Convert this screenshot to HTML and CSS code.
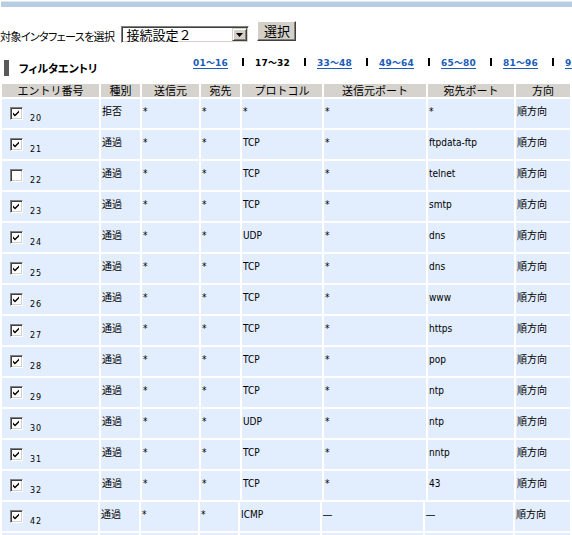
FILE: index.html
```html
<!DOCTYPE html>
<html lang="ja">
<head>
    <meta charset="UTF-8">
    <title>フィルタ設定</title>
    <link rel="stylesheet" href="styles.css">
</head>
<body>
    <div class="topbar"></div>

    <div class="pick">
        <span class="pick-label">対象インタフェースを選択</span>
        <div class="combo">
            <span class="combo-text">接続設定２</span>
            <span class="combo-btn"><svg width="7" height="4" viewBox="0 0 7 4"><path d="M0 0h7L3.5 4z" fill="#000"/></svg></span>
        </div>
        <button class="btn">選択</button>
    </div>

    <div class="head">
        <h2 class="title">フィルタエントリ</h2>
        <div class="pages">
            <a class="pg" href="#">01〜16</a><span class="sep"></span>
            <b class="pg cur">17〜32</b><span class="sep"></span>
            <a class="pg" href="#">33〜48</a><span class="sep"></span>
            <a class="pg" href="#">49〜64</a><span class="sep"></span>
            <a class="pg" href="#">65〜80</a><span class="sep"></span>
            <a class="pg" href="#">81〜96</a><span class="sep"></span>
            <a class="pg" href="#">97〜112</a>
        </div>
    </div>

    <table class="entries">
        <colgroup>
            <col style="width:97px"><col style="width:39px"><col style="width:57px"><col style="width:39px">
            <col style="width:80px"><col style="width:102px"><col style="width:86px"><col style="width:54px">
        </colgroup>
        <tr class="hd">
            <th>エントリ番号</th><th>種別</th><th>送信元</th><th>宛先</th>
            <th>プロトコル</th><th>送信元ポート</th><th>宛先ポート</th><th>方向</th>
        </tr>
        <tr><td class="no"><span class="cb on"></span><span class="num">20</span></td><td>拒否</td><td>*</td><td>*</td><td>*</td><td>*</td><td>*</td><td>順方向</td></tr>
        <tr><td class="no"><span class="cb on"></span><span class="num">21</span></td><td>通過</td><td>*</td><td>*</td><td>TCP</td><td>*</td><td>ftpdata-ftp</td><td>順方向</td></tr>
        <tr><td class="no"><span class="cb"></span><span class="num">22</span></td><td>通過</td><td>*</td><td>*</td><td>TCP</td><td>*</td><td>telnet</td><td>順方向</td></tr>
        <tr><td class="no"><span class="cb on"></span><span class="num">23</span></td><td>通過</td><td>*</td><td>*</td><td>TCP</td><td>*</td><td>smtp</td><td>順方向</td></tr>
        <tr><td class="no"><span class="cb on"></span><span class="num">24</span></td><td>通過</td><td>*</td><td>*</td><td>UDP</td><td>*</td><td>dns</td><td>順方向</td></tr>
        <tr><td class="no"><span class="cb on"></span><span class="num">25</span></td><td>通過</td><td>*</td><td>*</td><td>TCP</td><td>*</td><td>dns</td><td>順方向</td></tr>
        <tr><td class="no"><span class="cb on"></span><span class="num">26</span></td><td>通過</td><td>*</td><td>*</td><td>TCP</td><td>*</td><td>www</td><td>順方向</td></tr>
        <tr><td class="no"><span class="cb on"></span><span class="num">27</span></td><td>通過</td><td>*</td><td>*</td><td>TCP</td><td>*</td><td>https</td><td>順方向</td></tr>
        <tr><td class="no"><span class="cb on"></span><span class="num">28</span></td><td>通過</td><td>*</td><td>*</td><td>TCP</td><td>*</td><td>pop</td><td>順方向</td></tr>
        <tr><td class="no"><span class="cb on"></span><span class="num">29</span></td><td>通過</td><td>*</td><td>*</td><td>TCP</td><td>*</td><td>ntp</td><td>順方向</td></tr>
        <tr><td class="no"><span class="cb on"></span><span class="num">30</span></td><td>通過</td><td>*</td><td>*</td><td>UDP</td><td>*</td><td>ntp</td><td>順方向</td></tr>
        <tr><td class="no"><span class="cb on"></span><span class="num">31</span></td><td>通過</td><td>*</td><td>*</td><td>TCP</td><td>*</td><td>nntp</td><td>順方向</td></tr>
        <tr><td class="no"><span class="cb on"></span><span class="num">32</span></td><td>通過</td><td>*</td><td>*</td><td>TCP</td><td>*</td><td>43</td><td>順方向</td></tr>
    </table>

    <!-- 固定エントリ -->
    <table class="entries fixed">
        <colgroup>
            <col style="width:96px"><col style="width:39px"><col style="width:57px"><col style="width:38px">
            <col style="width:80px"><col style="width:101px"><col style="width:88px"><col style="width:55px">
        </colgroup>
        <tr><td class="no"><span class="cb on"></span><span class="num">42</span></td><td>通過</td><td>*</td><td>*</td><td>ICMP</td><td>―</td><td>―</td><td>順方向</td></tr>
        <tr><td class="no"></td><td></td><td></td><td></td><td></td><td></td><td></td><td></td></tr>
    </table>
</body>
</html>
```

FILE: styles.css
```css
body {
    margin: 0;
    font-family: "Noto Sans CJK JP", sans-serif;
    font-size: 11px;
    color: #000;
    background: #fff;
}
.topbar {
    height: 5px;
    margin: 1px 0 0 1px;
    background: #b8cee0;
    border-top: 1px solid #dce7f0;
}
.pick {
    display: flex;
    align-items: flex-start;
    height: 50px;
}
.pick-label {
    flex: none;
    margin-top: 22px;
    line-height: 14px;
    letter-spacing: -0.6px;
    font-feature-settings: "palt";
    white-space: nowrap;
}
.combo {
    flex: none;
    display: flex;
    margin: 19px 0 0 7px;
    width: 128px;
    height: 17px;
    box-sizing: border-box;
    background: #fff;
    border: 1px solid;
    border-color: #808080 #fff #fff #808080;
    box-shadow: inset 1px 1px #404040, inset -1px -1px #d4d0c8;
    padding: 1px;
}
.combo-text {
    flex: 1;
    font-size: 13px;
    line-height: 14px;
    padding-left: 3px;
}
.combo-btn {
    display: flex;
    align-items: center;
    justify-content: center;
    width: 15px;
    box-sizing: border-box;
    background: #d4d0c8;
    border: 1px solid;
    border-color: #d4d0c8 #404040 #404040 #d4d0c8;
    box-shadow: inset 1px 1px #fff, inset -1px -1px #808080;
}
.btn {
    flex: none;
    margin: 14px 0 0 8px;
    width: 39px;
    height: 20px;
    padding: 0;
    font-family: inherit;
    font-size: 13px;
    line-height: 14px;
    background: #d4d0c8;
    border: 1px solid;
    border-color: #fff #404040 #404040 #fff;
    box-shadow: inset -1px -1px #808080;
}
.head {
    display: flex;
    align-items: flex-start;
    height: 25px;
}
.title {
    flex: none;
    width: 174px;
    margin: 3px 0 0 4px;
    padding-left: 10px;
    height: 16px;
    border-left: 5px solid #595959;
    font-size: 11px;
    font-weight: bold;
    line-height: 17px;
    font-feature-settings: "palt";
    white-space: nowrap;
}
.pages {
    display: flex;
    align-items: flex-start;
    margin-top: 1px;
    white-space: nowrap;
}
.pg {
    flex: none;
    width: 36px;
    font-family: "DejaVu Sans", "Noto Sans CJK JP", sans-serif;
    font-size: 9px;
    font-weight: bold;
    line-height: 10px;
    letter-spacing: 0.2px;
}
a.pg {
    color: #1a5cb6;
    text-decoration: underline;
    text-underline-offset: 2px;
}
.pg.cur {
    color: #000;
}
.sep {
    flex: none;
    width: 2px;
    height: 8px;
    margin: 0 11px 0 13px;
    background: #000;
}
.entries {
    width: 572px;
    table-layout: fixed;
    border-spacing: 2px;
}
.entries.fixed {
    margin-top: -2px;
}
.entries th {
    padding: 0;
    background: #d6d3ce;
    font-weight: normal;
    line-height: 13px;
    text-align: center;
    white-space: nowrap;
}
.entries tr {
    height: 29px;
}
.entries tr.hd {
    height: 13px;
}
.entries td {
    padding: 6px 1px 0;
    background: #e2edfd;
    vertical-align: top;
    font-family: "DejaVu Sans Condensed", "DejaVu Sans", "Noto Sans CJK JP", sans-serif;
    font-stretch: condensed;
    font-size: 10px;
    line-height: 14px;
    white-space: nowrap;
    overflow: hidden;
}
.entries td.no {
    padding: 8px 0 0 8px;
    line-height: 13px;
}
.cb {
    display: inline-block;
    width: 13px;
    height: 13px;
    box-sizing: border-box;
    vertical-align: 1px;
    background: #fff;
    border: 1px solid;
    border-color: #808080 #fff #fff #808080;
    box-shadow: inset 1px 1px #404040, inset -1px -1px #d4d0c8;
}
.cb.on {
    background: #fff url("data:image/svg+xml,%3Csvg xmlns='http://www.w3.org/2000/svg' width='11' height='11'%3E%3Cpath d='M2 4.5l2 2 4-4v2l-4 4-2-2z' fill='%23000'/%3E%3C/svg%3E") no-repeat 0 0;
}
.num {
    margin-left: 7px;
    font-family: "DejaVu Sans", sans-serif;
    font-stretch: normal;
    font-size: 8px;
    letter-spacing: 1px;
}
```
